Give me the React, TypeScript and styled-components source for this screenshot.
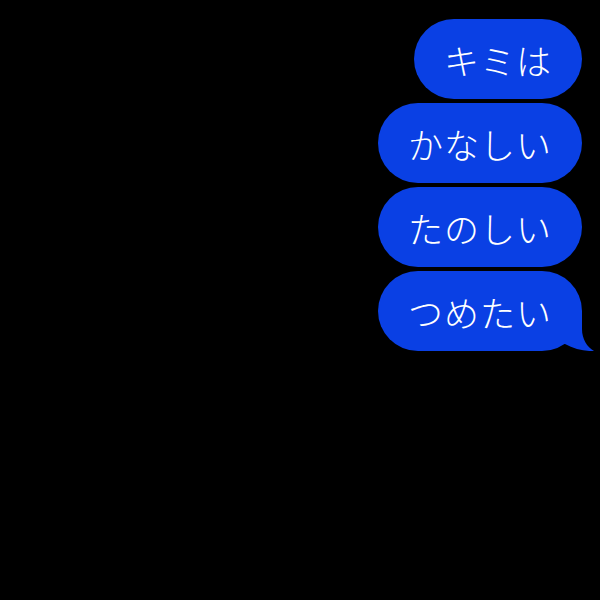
import React from "react";
import styled, { createGlobalStyle } from "styled-components";

const GlobalStyle = createGlobalStyle`
  html, body {
    margin: 0;
    padding: 0;
    background: #000000;
  }
  body {
    font-family: "Noto Sans CJK JP", "Noto Sans", sans-serif;
  }
`;

const Screen = styled.div`
  width: 600px;
  height: 600px;
  background: #000000;
  display: flex;
  flex-direction: column;
  align-items: flex-end;
  gap: 4px;
  padding: 19px 18px 0 0;
  box-sizing: border-box;
`;

const Bubble = styled.div`
  position: relative;
  height: 80px;
  padding: 0 30px;
  border-radius: 40px;
  background: #0a40e4;
  color: #ffffff;
  font-size: 35px;
  font-weight: 300;
  letter-spacing: 1px;
  display: flex;
  align-items: center;
  box-sizing: border-box;
  white-space: nowrap;
`;

const Tail = styled.svg`
  position: absolute;
  right: -12px;
  bottom: 0;
  width: 40px;
  height: 40px;
`;

const messages = ["キミは", "かなしい", "たのしい", "つめたい"];

export default function App() {
  return (
    <>
      <GlobalStyle />
      <Screen>
        {messages.map((text, i) => (
          <Bubble key={text}>
            {text}
            {i === messages.length - 1 && (
              <Tail viewBox="0 0 40 40">
                <path
                  d="M0 0 L28 0 L28 18 C28 28 33 36 40 40 C31 40.5 20 38 11 33 L0 33 Z"
                  fill="#0a40e4"
                />
              </Tail>
            )}
          </Bubble>
        ))}
      </Screen>
    </>
  );
}
